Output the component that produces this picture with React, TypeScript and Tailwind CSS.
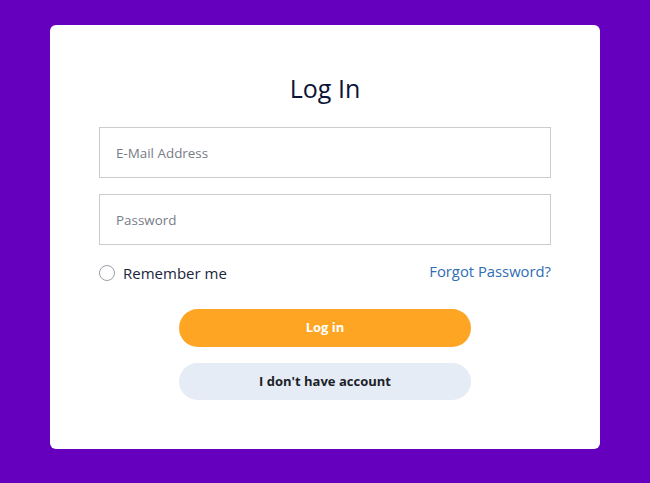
import React from "react";

export default function App() {
  return (
    <div
      className="h-[483px] w-full bg-[#6600bf] pt-[25px]"
      style={{ fontFamily: '"Open Sans", "Noto Sans", sans-serif' }}
    >
      <div className="mx-auto w-[550px] rounded-[6px] bg-white px-[49px] pt-[47px] pb-[49px]">
        <h1 className="text-center text-[25px] leading-[32px] font-normal text-[#0b1437]">Log In</h1>
        <div className="mt-[23px] flex flex-col gap-[16px]">
          <input
            type="email"
            placeholder="E-Mail Address"
            className="h-[51px] w-full border border-[#cccccc] px-[16px] text-[13.4px] text-[#333] placeholder:text-[#777c86] outline-none"
          />
          <input
            type="password"
            placeholder="Password"
            className="h-[51px] w-full border border-[#cccccc] px-[16px] text-[13.4px] text-[#333] placeholder:text-[#777c86] outline-none"
          />
        </div>
        <div className="mt-[18px] flex h-[20px] items-center justify-between">
          <label className="flex items-center gap-[8px]">
            <span className="block h-[16px] w-[16px] rounded-full border border-[#9aa0a6] bg-white" />
            <span className="text-[15px] text-[#1c2440]">Remember me</span>
          </label>
          <a className="-mt-[3px] text-[14.8px] text-[#2f6db5]" href="#">
            Forgot Password?
          </a>
        </div>
        <div className="mt-[26px] flex flex-col items-center gap-[16px]">
          <button className="h-[38px] w-[292px] rounded-full bg-[#fea623] text-[13px] font-bold text-white">
            Log in
          </button>
          <button className="h-[37px] w-[292px] rounded-full bg-[#e6ecf5] text-[13px] font-bold text-[#1c1f2a]">
            I don't have account
          </button>
        </div>
      </div>
    </div>
  );
}
